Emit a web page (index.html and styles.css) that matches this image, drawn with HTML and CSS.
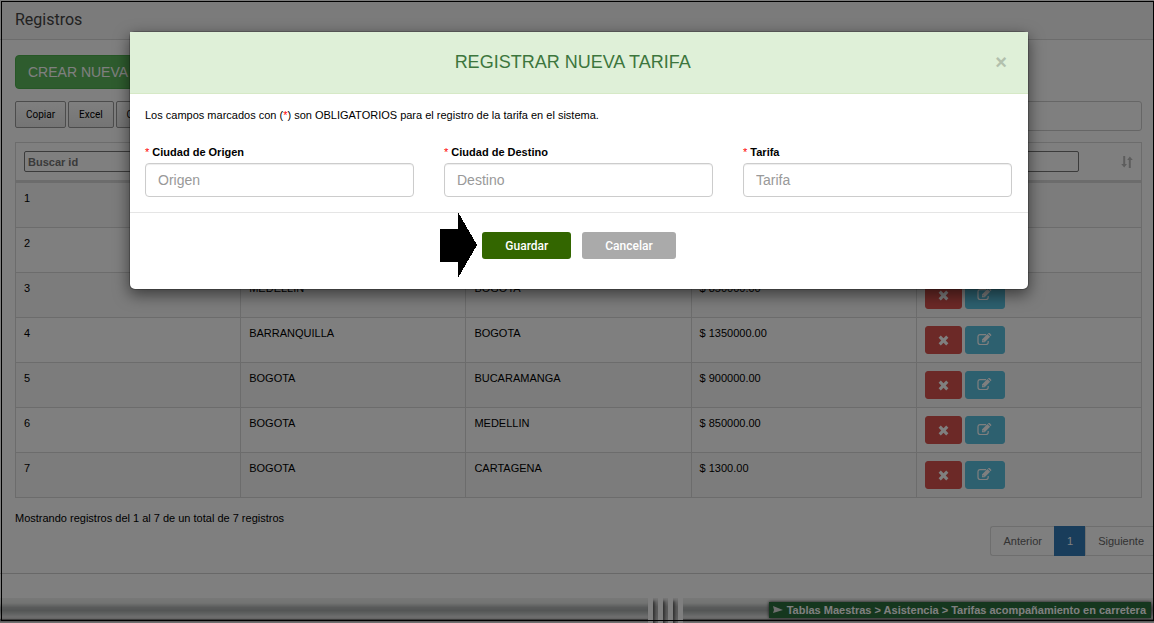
FILE: index.html
```html
<!DOCTYPE html>
<html lang="es">
<head>
<meta charset="utf-8">
<title>Registros</title>
<link rel="stylesheet" href="styles.css">
</head>
<body>
<svg class="defs" aria-hidden="true">
  <symbol id="times" viewBox="0 0 11 11"><path d="M2.8 0.6 5.5 3.3 8.2 0.6 10.4 2.8 7.7 5.5 10.4 8.2 8.2 10.4 5.5 7.7 2.8 10.4 0.6 8.2 3.3 5.5 0.6 2.8Z" fill="currentColor"/></symbol>
  <symbol id="edit" viewBox="0 0 15 13"><path d="M9 1.6H3.2Q1 1.6 1 3.8V9.3Q1 11.5 3.2 11.5H9Q11.2 11.5 11.2 9.3V8" fill="none" stroke="currentColor" stroke-width="1.2"/><path d="M5 9.2V6.5L10.4 1.1 13.1 3.8 7.7 9.2ZM11 .5 11.5.1Q12.2-.3 12.8.3L14 1.5Q14.6 2.1 14.1 2.8L13.7 3.2Z" fill="currentColor"/><path d="M5.8 7.2 7 8.4" stroke="#5bc0de" stroke-width=".8"/></symbol>
  <symbol id="sort" viewBox="0 0 12 12"><path d="M2.2 0H4.2V8H6L3.2 11.6.2 8H2.2ZM7.8 12V4H6.2L8.8.4 11.8 4H9.8V12Z" fill="currentColor"/></symbol>
</svg>
<div class="page">
  <header class="title-bar"><h1>Registros</h1></header>
  <main class="content">
    <button class="btn-create" type="button">CREAR NUEVA TARIFA</button>
    <div class="tools">
      <button type="button">Copiar</button>
      <button type="button">Excel</button>
      <button type="button">CSV</button>
      <input class="search" type="search" aria-label="Buscar">
    </div>
    <table class="records">
      <thead>
        <tr>
          <th><input type="text" placeholder="Buscar id" aria-label="Buscar id"></th>
          <th><input type="text" aria-label="Buscar origen"></th>
          <th><input type="text" aria-label="Buscar destino"></th>
          <th><input type="text" aria-label="Buscar tarifa"></th>
          <th><div class="th-row"><input type="text" aria-label="Buscar acciones"><svg class="sort"><use href="#sort"/></svg></div></th>
        </tr>
      </thead>
      <tbody>
        <tr><td>1</td><td></td><td></td><td></td><td><div class="actions"></div></td></tr>
        <tr><td>2</td><td></td><td></td><td></td><td><div class="actions"></div></td></tr>
        <tr><td>3</td><td>MEDELLIN</td><td>BOGOTA</td><td>$ 850000.00</td><td><div class="actions"><button class="del" type="button" aria-label="Eliminar"><svg><use href="#times"/></svg></button><button class="edit" type="button" aria-label="Editar"><svg><use href="#edit"/></svg></button></div></td></tr>
        <tr><td>4</td><td>BARRANQUILLA</td><td>BOGOTA</td><td>$ 1350000.00</td><td><div class="actions"><button class="del" type="button" aria-label="Eliminar"><svg><use href="#times"/></svg></button><button class="edit" type="button" aria-label="Editar"><svg><use href="#edit"/></svg></button></div></td></tr>
        <tr><td>5</td><td>BOGOTA</td><td>BUCARAMANGA</td><td>$ 900000.00</td><td><div class="actions"><button class="del" type="button" aria-label="Eliminar"><svg><use href="#times"/></svg></button><button class="edit" type="button" aria-label="Editar"><svg><use href="#edit"/></svg></button></div></td></tr>
        <tr><td>6</td><td>BOGOTA</td><td>MEDELLIN</td><td>$ 850000.00</td><td><div class="actions"><button class="del" type="button" aria-label="Eliminar"><svg><use href="#times"/></svg></button><button class="edit" type="button" aria-label="Editar"><svg><use href="#edit"/></svg></button></div></td></tr>
        <tr><td>7</td><td>BOGOTA</td><td>CARTAGENA</td><td>$ 1300.00</td><td><div class="actions"><button class="del" type="button" aria-label="Eliminar"><svg><use href="#times"/></svg></button><button class="edit" type="button" aria-label="Editar"><svg><use href="#edit"/></svg></button></div></td></tr>
      </tbody>
    </table>
    <div class="table-foot">
      <p>Mostrando registros del 1 al 7 de un total de 7 registros</p>
      <nav class="pages" aria-label="Páginas"><a href="#">Anterior</a><a href="#" class="current">1</a><a href="#">Siguiente</a></nav>
    </div>
  </main>
  <footer class="strip">
    <div class="metal metal-left"></div>
    <div class="bars"><i></i><i></i><i></i><i></i></div>
    <div class="metal metal-right">
      <div class="crumb"><svg viewBox="0 0 10 8"><path d="M0 0 10 4 0 7 1 4Z" fill="currentColor"/></svg><span>Tablas Maestras &gt; Asistencia &gt; Tarifas acompañamiento en carretera</span></div>
    </div>
  </footer>
</div>
<div class="overlay">
  <form class="modal" role="dialog" aria-labelledby="modal-title">
    <div class="modal-head">
      <h2 id="modal-title">REGISTRAR NUEVA TARIFA</h2>
      <button class="close" type="button" aria-label="Cerrar">×</button>
    </div>
    <div class="modal-body">
      <p>Los campos marcados con (<span class="req">*</span>) son OBLIGATORIOS para el registro de la tarifa en el sistema.</p>
      <div class="fields">
        <div><label for="origen"><span class="req">*</span> Ciudad de Origen</label><input id="origen" type="text" placeholder="Origen"></div>
        <div><label for="destino"><span class="req">*</span> Ciudad de Destino</label><input id="destino" type="text" placeholder="Destino"></div>
        <div><label for="tarifa"><span class="req">*</span> Tarifa</label><input id="tarifa" type="text" placeholder="Tarifa"></div>
      </div>
    </div>
    <div class="modal-foot">
      <div class="save-wrap">
        <svg class="arrow" viewBox="0 0 37 66" shape-rendering="crispEdges" aria-hidden="true"><path d="M0 17H18V0L37 33 18 66V50H0Z"/></svg>
        <button class="save" type="button">Guardar</button>
      </div>
      <button class="cancel" type="button">Cancelar</button>
    </div>
  </form>
</div>
<div class="frame"></div>
</body>
</html>
```
FILE: styles.css
```css
* { box-sizing: border-box; }
body {
  margin: 0;
  position: relative;
  min-height: 100vh;
  overflow: hidden;
  background: #fff;
  color: #000;
  font: 11px/16px "Liberation Sans", Arial, sans-serif;
}
h1, h2, p { margin: 0; font-weight: 400; }
button, input { font: inherit; }
.defs { position: absolute; width: 0; height: 0; }

.page { min-height: 100vh; display: flex; flex-direction: column; }
.title-bar {
  padding: 10px 15px 9px;
  background: #f6f6f6;
  border-bottom: 1px solid #d8d8d8;
}
.title-bar h1 { color: #444; font: 16px/20px Roboto, "Liberation Sans", sans-serif; }
.content {
  padding: 15px 12px 17px 15px;
  border-bottom: 1px solid #d0d0d0;
}
.btn-create {
  display: block;
  height: 34px;
  padding: 0 12px;
  border: 1px solid #4cae4c;
  border-radius: 4px;
  background: #5cb85c;
  color: #fff;
  font-size: 14px;
}
.tools { display: flex; align-items: flex-start; gap: 2px; margin: 12px 0 11px; }
.tools button {
  height: 27px;
  padding: 0 10px;
  border: 1px solid #999;
  border-radius: 2px;
  background: linear-gradient(#fff, #e9e9e9);
  font: 10px/16px Roboto, "Liberation Sans", sans-serif;
  color: #000;
}
.search {
  width: 300px;
  height: 30px;
  margin-left: auto;
  border: 1px solid #ccc;
  border-radius: 3px;
  background: #fff;
}

.records {
  width: 100%;
  table-layout: fixed;
  border-collapse: collapse;
  border: 1px solid #d8d8d8;
}
.records th { padding: 8px; border: 1px solid #d8d8d8; border-bottom: 3px solid #d8d8d8; text-align: left; }
.records td { height: 45px; padding: 7px 8px 8px; border: 1px solid #d8d8d8; vertical-align: top; }
.records tbody tr:first-child td { height: 46px; }
.records tbody tr:nth-child(odd) { background: #f9f9f9; }
.records th input {
  display: block;
  width: 154px;
  height: 21px;
  padding: 0 3px;
  border: 1px solid #767676;
  border-radius: 2px;
  background: #fff;
  font-weight: 700;
}
.records th input::placeholder { color: #757575; }
.th-row { display: flex; align-items: center; justify-content: space-between; }
.sort { width: 12px; height: 12px; color: #bbb; }
.actions { display: flex; gap: 3px; padding-top: 1px; }
.actions button {
  display: flex;
  align-items: center;
  justify-content: center;
  height: 28px;
  padding: 0;
  border-radius: 3px;
  color: #fff;
}
.actions .del { width: 37px; border: 1px solid #d9534f; background: #d9534f; }
.actions .edit { width: 40px; border: 1px solid #5bc0de; padding-bottom: 1px; background: #5bc0de; }
.del svg { width: 11px; height: 11px; }
.edit svg { width: 15px; height: 13px; }

.table-foot { display: flex; justify-content: space-between; margin-right: -14px; padding-top: 12px; }
.pages { display: flex; margin-top: 16px; }
.pages a {
  padding: 6px 12px;
  border: 1px solid #ddd;
  border-right: 0;
  color: #666;
  text-decoration: none;
}
.pages a:first-child { border-radius: 3px 0 0 3px; }
.pages .current { border-color: #337ab7; background: #337ab7; color: #fff; }

.strip { display: flex; height: 25px; margin-top: auto; }
.metal {
  background: linear-gradient(#f0f0f0 0, #e6e8e6 20%, #b2b5b5 38%, #a8acac 50%, #bfc3c2 62%, #dedede 76%, #ccc 82%, #555 88%, #ddd 96%);
}
.metal-left { flex: 567; }
.metal-right { flex: 409; display: flex; justify-content: flex-end; align-items: flex-start; padding: 4px 3px 0 0; }
.bars { display: flex; gap: 5px; background: linear-gradient(#f0f0f0 0, #bbb 35%, #bbb 60%, #ccc 100%); }
.bars i { width: 5px; background: #fff; box-shadow: 2px 3px 3px rgba(0, 0, 0, .5); }
.crumb {
  display: flex;
  align-items: center;
  gap: 4px;
  height: 16px;
  padding: 0 5px 0 4px;
  background: #2a6e3c;
  box-shadow: 0 0 3px #333;
  color: #fff;
  font-weight: 700;
  white-space: nowrap;
}
.crumb svg { width: 10px; height: 8px; color: #ddd; }

.overlay {
  position: absolute;
  inset: 0;
  display: flex;
  justify-content: center;
  align-items: flex-start;
  padding: 31px 0 30px 4px;
  background: rgba(0, 0, 0, .5);
}
.frame {
  position: absolute;
  inset: 1px 0 2px 1px;
  border: 1px solid #000;
  pointer-events: none;
}
.modal {
  width: 900px;
  border: 1px solid rgba(0, 0, 0, .2);
  border-radius: 6px;
  background: #fff;
  background-clip: padding-box;
  box-shadow: 0 5px 15px rgba(0, 0, 0, .5);
}
.modal-head {
  display: flex;
  align-items: center;
  padding: 14px 21px 15px 20px;
  border-bottom: 1px solid #d6e9c6;
  background: #dff0d8;
}
.modal-head h2 { flex: 1; color: #3c763d; font-size: 18px; line-height: 32px; text-align: center; }
.close {
  padding: 0;
  border: 0;
  background: none;
  color: #b2c0ad;
  font-size: 20px;
  font-weight: 700;
  line-height: 20px;
}
.modal-body { padding: 13px 16px 15px 15px; }
.fields { display: grid; grid-template-columns: repeat(3, 1fr); gap: 30px; margin-top: 21px; }
.fields label { display: block; margin-bottom: 3px; font-weight: 700; }
.req { color: #f00; font-weight: 400; }
.fields input {
  display: block;
  width: 100%;
  height: 34px;
  padding: 6px 12px;
  border: 1px solid #ccc;
  border-radius: 4px;
  box-shadow: inset 0 1px 1px rgba(0, 0, 0, .075);
  font-size: 14px;
}
.fields input::placeholder { color: #999; }
.modal-foot {
  display: flex;
  justify-content: center;
  gap: 11px;
  padding: 19px 15px 30px;
  border-top: 1px solid #e5e5e5;
}
.save-wrap { position: relative; }
.arrow { position: absolute; right: 94px; top: -20px; width: 37px; height: 66px; }
.save, .cancel {
  height: 27px;
  padding: 0 23px;
  border: 0;
  border-radius: 3px;
  color: #fff;
  font: 500 12px/16px Roboto, "Liberation Sans", sans-serif;
}
.save { background: #360; }
.cancel { background: #aaa; }
```
